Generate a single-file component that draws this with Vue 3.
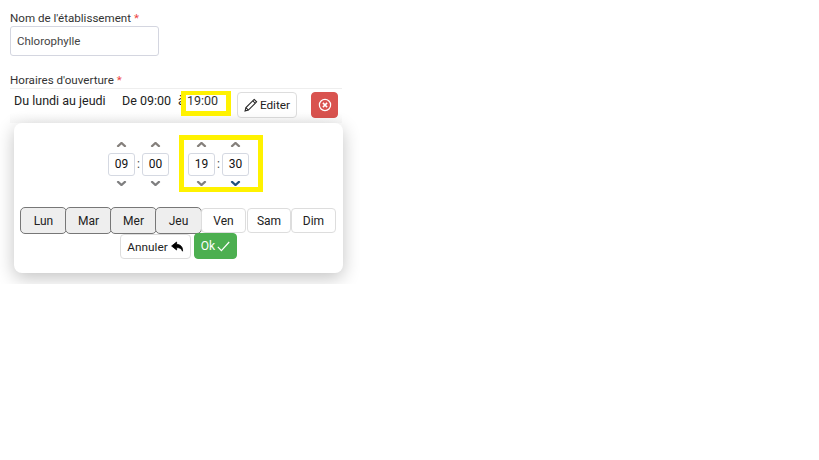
<script setup>
const groups = [
  [
    { value: '09', dark: false },
    { value: '00', dark: false }
  ],
  [
    { value: '19', dark: false },
    { value: '30', dark: true }
  ]
]
const days = [
  { label: 'Lun', on: true, w: 47, m: -2 },
  { label: 'Mar', on: true, w: 47, m: -2 },
  { label: 'Mer', on: true, w: 47, m: -2 },
  { label: 'Jeu', on: true, w: 47, m: -1 },
  { label: 'Ven', on: false, w: 45, m: 1 },
  { label: 'Sam', on: false, w: 44, m: 0 },
  { label: 'Dim', on: false, w: 45, m: 0 }
]
</script>

<template>
  <div class="page">
    <label class="label first">Nom de l'établissement <span class="req">*</span></label>
    <div class="input">Chlorophylle</div>
    <label class="label second">Horaires d'ouverture <span class="req">*</span></label>
    <div class="row">
      <span class="days-text">Du lundi au jeudi</span>
      <span class="hours">De 09:00</span>
      <span class="a">à</span>
      <span class="end">19:00</span>
      <button class="btn edit">
        <svg width="14" height="14" viewBox="0 0 16 16" fill="none" stroke="#222" stroke-width="1.2">
          <path d="M11.6 1.6l2.8 2.8L5 13.8 1.2 14.8l1-3.8z" />
          <path d="M10 3.2l2.8 2.8M2.2 11l2.8 2.8" />
        </svg>
        Editer
      </button>
      <button class="btn del">
        <svg width="14" height="14" viewBox="0 0 16 16" fill="none" stroke="#fff" stroke-width="1.4">
          <circle cx="8" cy="8" r="6.4" />
          <path d="M5.6 5.6l4.8 4.8M10.4 5.6l-4.8 4.8" stroke-width="1.7" />
        </svg>
      </button>
    </div>
    <div class="card">
      <div class="times">
        <div v-for="(g, n) in groups" :key="n" class="group">
          <template v-for="(f, i) in g" :key="f.value">
            <span v-if="i" class="colon">:</span>
            <div class="spin">
              <svg class="chev" width="10" height="5" viewBox="0 0 10 5"><path d="M.8 4.800L5 1l4.200 3.800" fill="none" stroke="#85807c" stroke-width="2.300" /></svg>
              <div class="num">{{ f.value }}</div>
              <svg class="chev" width="10" height="5" viewBox="0 0 10 5"><path d="M.8.2L5 4l4.200-3.800" fill="none" :stroke="f.dark ? '#23527c' : '#7f7f80'" stroke-width="2.300" /></svg>
            </div>
          </template>
        </div>
      </div>
      <div class="days">
        <button
          v-for="d in days"
          :key="d.label"
          class="day"
          :class="{ on: d.on }"
          :style="{ width: d.w + 'px', marginRight: d.m + 'px' }"
        >{{ d.label }}</button>
      </div>
      <div class="actions">
        <button class="btn cancel">
          Annuler
          <svg width="13" height="12" viewBox="0 0 13 12"><path d="M5.600 1L.6 5l5 4V6.600c2.800 0 4.600.6 5.900 3.600.5-3.600-1.500-6.700-5.900-6.900z" fill="#000" stroke="#000" stroke-width=".8" /></svg>
        </button>
        <button class="btn ok">
          Ok
          <svg width="13" height="11" viewBox="0 0 13 11"><path d="M.8 5.800l3.600 3.800L12.200 1" fill="none" stroke="#fff" stroke-width="1.200" /></svg>
        </button>
      </div>
    </div>
    <div class="mark mark-a"></div>
    <div class="mark mark-b"></div>
  </div>
</template>

<style>
body {
  margin: 0;
  background: #fff;
}
</style>

<style scoped>
.page {
  position: relative;
  width: 360px;
  height: 284px;
  overflow: hidden;
  padding-left: 10px;
  box-sizing: border-box;
  font-family: Roboto, "Liberation Sans", sans-serif;
  font-size: 12px;
  color: #222;
}
.label {
  display: block;
  height: 14px;
  line-height: 14px;
  font-size: 11.6px;
  color: #333;
}
.first {
  padding-top: 11px;
  margin-bottom: 1px;
}
.second {
  margin-top: 17px;
}
.req {
  color: #e44;
}
.input {
  width: 149px;
  height: 30px;
  box-sizing: border-box;
  border: 1px solid #d4d6e0;
  border-radius: 3px;
  padding-left: 6px;
  line-height: 28px;
  font-size: 11.5px;
  color: #444;
}
.row {
  display: flex;
  align-items: flex-start;
  width: 332px;
  height: 35px;
  border-top: 1px solid #eee;
  margin-top: 1px;
  background: linear-gradient(#fff 70%, #f8f8f8);
  box-sizing: border-box;
  padding-left: 4px;
  line-height: 23px;
  font-size: 12.5px;
}
.days-text {
  width: 108px;
}
.hours {
  width: 56px;
}
.a {
  width: 9px;
}
.end {
  width: 50px;
  color: #333;
}
.btn {
  font: inherit;
  font-size: 11.8px;
  color: #222;
  border-radius: 4px;
  box-sizing: border-box;
  border: 1px solid #ddd;
  background: #fff;
  padding: 0;
  display: flex;
  align-items: center;
  justify-content: center;
}
.edit {
  width: 60px;
  height: 26px;
  margin-top: 3px;
  gap: 2px;
}
.del {
  width: 27px;
  height: 26px;
  margin-top: 3px;
  margin-left: 14px;
  background: #d9534f;
  border-color: #d9534f;
}
.card {
  position: relative;
  margin-left: 4px;
  width: 329px;
  height: 150px;
  background: #fff;
  border-radius: 8px;
  box-shadow: 0 5px 18px rgba(0, 0, 0, 0.24);
}
.times {
  display: flex;
  padding-left: 94px;
  padding-top: 19px;
  gap: 19px;
}
.group {
  display: flex;
  align-items: center;
}
.colon {
  width: 7px;
  text-align: center;
  color: #444;
}
.spin {
  display: flex;
  flex-direction: column;
  align-items: center;
  width: 27px;
}
.chev {
  display: block;
  transform: translateX(-0.5px);
}
.num {
  width: 27px;
  height: 23px;
  margin: 6px 0 5px;
  box-sizing: border-box;
  border: 1px solid #d5d9e2;
  border-radius: 3px;
  text-align: center;
  line-height: 21px;
  color: #111;
}
.days {
  display: flex;
  align-items: center;
  margin-top: 21px;
  padding-left: 6px;
}
.day {
  font: inherit;
  color: #222;
  height: 25px;
  box-sizing: border-box;
  background: #fff;
  border: 1px solid #ddd;
  border-radius: 4px;
  padding: 0;
}
.day.on {
  background: #eee;
  border-color: #777;
  height: 27px;
  border-radius: 5px;
}
.actions {
  display: flex;
  padding-left: 106px;
  gap: 3px;
  align-items: flex-start;
}
.cancel {
  width: 71px;
  height: 25px;
  gap: 3px;
}
.ok {
  width: 43px;
  height: 26px;
  margin-top: -1px;
  background: #4caf50;
  border-color: #4caf50;
  color: #fff;
  gap: 2px;
  font-size: 12px;
}
.mark {
  position: absolute;
  box-sizing: border-box;
  border: 5px solid #fff200;
  pointer-events: none;
}
.mark-a {
  left: 181px;
  top: 91px;
  width: 50px;
  height: 25px;
  border-width: 4px 5px 5px;
}
.mark-b {
  left: 179px;
  top: 135px;
  width: 84px;
  height: 57px;
}
</style>
